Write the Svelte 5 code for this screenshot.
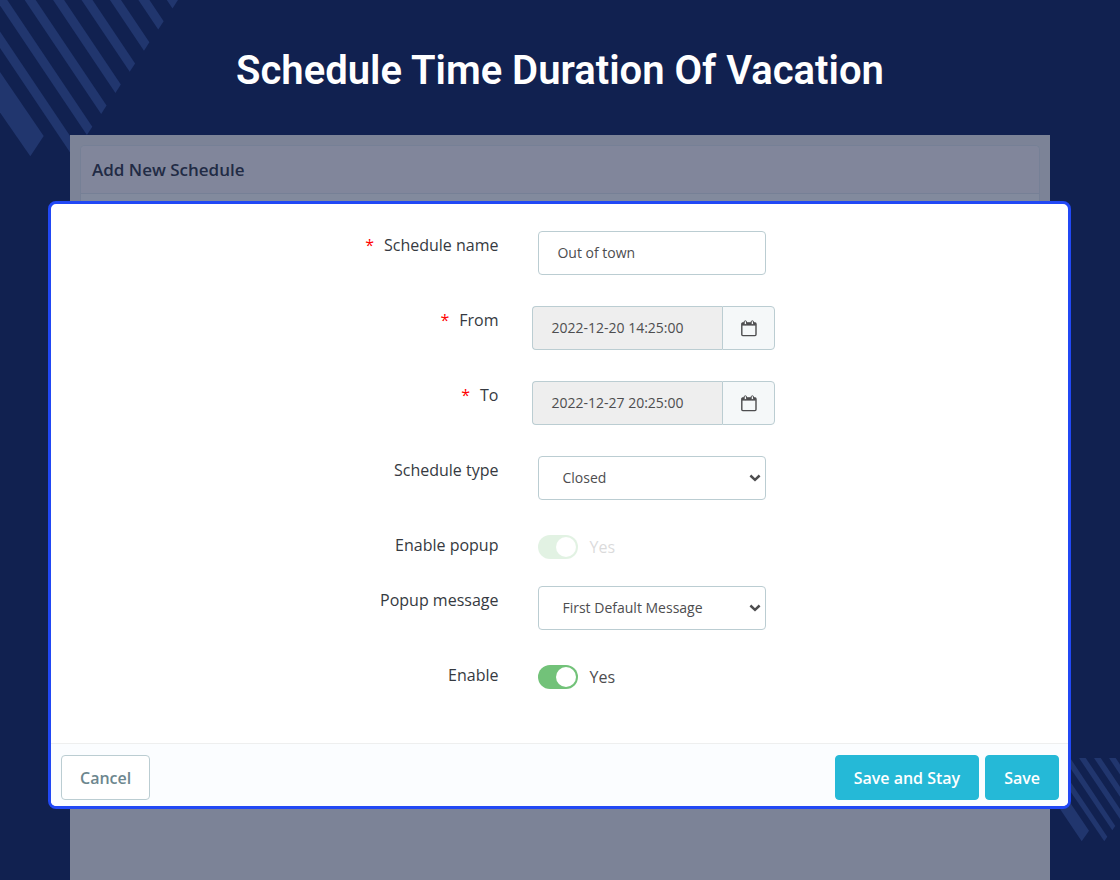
<script>
  let name = $state('Out of town');
  let type = $state('Closed');
  let message = $state('First Default Message');
  let enabled = $state(true);

  const dates = [
    { id: 'from', label: 'From', value: '2022-12-20 14:25:00' },
    { id: 'to', label: 'To', value: '2022-12-27 20:25:00' }
  ];
  const stripes = [-1, 0, 1, 2, 3, 4, 5, 6];

  function stripe(k) {
    const x = 92.3 + 14.27 * k;
    const y = 126.7 - 21.1 * k;
    return `M${x} ${y}L${x - 5.4} ${y + 8.4}l-130 -193.7L${x - 130} ${y - 193.7}Z`;
  }
</script>

{#snippet chevron()}
  <svg class="chevron" width="12" height="8" viewBox="0 0 12 8" aria-hidden="true">
    <path d="M1.4 1.5 6 5.8 10.6 1.5" fill="none" stroke="#4d4d4f" stroke-width="2.5" />
  </svg>
{/snippet}

<div class="page">
  <svg class="stripes top" width="190" height="160" viewBox="0 0 190 160" aria-hidden="true">
    <path d="M0 72 43.7 136 30.3 156.3 0 112.5Z" />
    {#each stripes as k}
      <path d={stripe(k)} />
    {/each}
  </svg>
  <svg class="stripes bottom" width="80" height="84" viewBox="1040 758 80 84" aria-hidden="true">
    <path d="M1089 830.7 1081.7 841.3 1040 779.2V758Z" />
    <path d="M1047.7 758h6.7l52.9 78.7-3 4.6Z" />
    <path d="M1063.5 758h6.7l45.1 68-3 4.3Z" />
    <path d="M1079 758h6.7l34.3 51v10Z" />
    <path d="M1094 758h6.7l19.3 28.7v10Z" />
    <path d="M1109 758h6.7l4.3 6.4v10Z" />
  </svg>

  <h1>Schedule Time Duration Of Vacation</h1>

  <main class="panel">
    <div class="card"><h2>Add New Schedule</h2></div>

    <form class="dialog" onsubmit={(e) => e.preventDefault()}>
      <div class="fields">
        <div class="row">
          <label class="label" for="name"><span class="star">*</span>Schedule name</label>
          <input class="box" id="name" type="text" bind:value={name} />
        </div>
        {#each dates as d}
          <div class="row">
            <label class="label" for={d.id}><span class="star">*</span>{d.label}</label>
            <div class="date">
              <input id={d.id} type="text" value={d.value} readonly />
              <button type="button" aria-label="Pick date">
                <svg width="16" height="18" viewBox="0 0 16 18" aria-hidden="true">
                  <rect x="0.8" y="4" width="14.2" height="12.6" rx="1" fill="none" stroke="#4d4d4f" stroke-width="1.4" />
                  <path d="M1 3.8h13.8v2.8H1z" fill="#4d4d4f" />
                  <rect x="3.2" y="1.8" width="2.3" height="3.8" rx="1.1" fill="#f5f8f9" stroke="#4d4d4f" stroke-width="1" />
                  <rect x="10.2" y="1.8" width="2.3" height="3.8" rx="1.1" fill="#f5f8f9" stroke="#4d4d4f" stroke-width="1" />
                </svg>
              </button>
            </div>
          </div>
        {/each}
        <div class="row">
          <label class="label" for="type">Schedule type</label>
          <div class="pick">
            <select class="box" id="type" bind:value={type}>
              <option>Closed</option>
              <option>Open</option>
            </select>
            {@render chevron()}
          </div>
        </div>
        <div class="row short">
          <label class="label" for="popup">Enable popup</label>
          <div class="switch faded">
            <input id="popup" type="checkbox" checked disabled />
            <span>Yes</span>
          </div>
        </div>
        <div class="row">
          <label class="label" for="message">Popup message</label>
          <div class="pick">
            <select class="box" id="message" bind:value={message}>
              <option>First Default Message</option>
            </select>
            {@render chevron()}
          </div>
        </div>
        <div class="row short">
          <label class="label" for="enable">Enable</label>
          <div class="switch">
            <input id="enable" type="checkbox" bind:checked={enabled} />
            <span>{enabled ? 'Yes' : 'No'}</span>
          </div>
        </div>
      </div>
      <footer>
        <button class="btn cancel" type="button">Cancel</button>
        <button class="btn primary" type="submit">Save and Stay</button>
        <button class="btn primary" type="submit">Save</button>
      </footer>
    </form>
  </main>
</div>

<style>
  :global(body) {
    margin: 0;
  }
  .page,
  .page * {
    box-sizing: border-box;
  }
  .page {
    position: relative;
    min-height: 100vh;
    display: flex;
    flex-direction: column;
    background: #112150;
    font-family: 'Open Sans', sans-serif;
    font-size: 16px;
    line-height: 22px;
    color: #363a41;
    overflow: hidden;
  }
  .stripes {
    position: absolute;
    fill: #21366e;
  }
  .top {
    top: 0;
    left: 0;
  }
  .bottom {
    right: 0;
    bottom: 38px;
  }
  h1 {
    margin: 0;
    padding: 47px 24px 40px;
    font: 600 40px/48px Roboto, sans-serif;
    color: #fff;
    text-align: center;
  }
  .panel {
    position: relative;
    flex: 1;
    margin: 0 70px;
    padding-top: 10px;
    background: #7c8397;
  }
  .card {
    margin: 0 10px;
    height: 56px;
    border: 1px solid #768096;
    border-bottom: 0;
    border-radius: 5px 5px 0 0;
    background: #828a9d;
  }
  h2 {
    margin: 0;
    padding: 12px 11px;
    border-bottom: 1px solid #768096;
    border-radius: 4px 4px 0 0;
    background: #81869b;
    font-size: 17px;
    font-weight: 600;
    line-height: 23px;
    color: #212b45;
  }
  .dialog {
    margin: 0 -21px 71px -22px;
    border: 3px solid #2148f5;
    border-radius: 8px;
    background: #fff;
    overflow: hidden;
  }
  .fields {
    padding: 27px 0 54px;
  }
  .row {
    display: grid;
    grid-template-columns: 44% 1fr;
    column-gap: 40px;
    align-items: start;
    min-height: 44px;
  }
  .row + .row {
    margin-top: 31px;
  }
  .row.short {
    min-height: 28px;
  }
  .row.short + .row {
    margin-top: 27px;
  }
  .label {
    padding-top: 3px;
    text-align: right;
  }
  .star {
    margin-right: 10px;
    color: #f00;
  }
  .box,
  .date input {
    margin: 0;
    height: 44px;
    border: 1px solid #bbcdd2;
    border-radius: 4px;
    padding: 0 18px 1px;
    background: #fff;
    font: 14px/20px 'Open Sans', sans-serif;
    color: #4d4d4f;
  }
  .box {
    width: 228px;
  }
  .date {
    display: flex;
    width: 243px;
    margin-left: -6px;
  }
  .date input {
    flex: 1;
    min-width: 0;
    border-right: 0;
    border-radius: 4px 0 0 4px;
    background: #eee;
  }
  .date button {
    display: grid;
    place-items: center;
    width: 53px;
    padding: 0;
    border: 1px solid #bbcdd2;
    border-radius: 0 4px 4px 0;
    background: #f5f8f9;
  }
  .pick {
    display: grid;
    width: 228px;
    align-items: center;
  }
  .pick > :global(*) {
    grid-area: 1 / 1;
  }
  .pick .box {
    appearance: none;
    padding: 0 24px 0 23px;
  }
  .chevron {
    justify-self: end;
    margin-right: 5px;
    pointer-events: none;
  }
  .switch {
    display: flex;
    align-items: center;
    gap: 11px;
    padding-top: 4px;
    line-height: 24px;
    color: #4d4d4f;
  }
  .faded {
    opacity: 0.2;
  }
  .switch input {
    appearance: none;
    display: flex;
    align-items: center;
    justify-content: flex-start;
    width: 40px;
    height: 24px;
    margin: 0;
    padding: 2px;
    border-radius: 12px;
    background: #b3c7cd;
  }
  .switch input:checked {
    justify-content: flex-end;
    background: #72c279;
  }
  .switch input::before {
    content: '';
    width: 20px;
    height: 20px;
    border-radius: 50%;
    background: #fff;
  }
  footer {
    display: flex;
    gap: 6px;
    padding: 11px 9px 6px 10px;
    border-top: 1px solid #eeefef;
    background: #fbfdff;
  }
  .btn {
    height: 45px;
    padding: 0 18px;
    border: 1px solid #25b9d7;
    border-radius: 4px;
    font: 600 16px/22px 'Open Sans', sans-serif;
  }
  .cancel {
    margin-right: auto;
    border-color: #bbcdd2;
    background: #fff;
    color: #6c868e;
  }
  .primary {
    background: #25b9d7;
    color: #fff;
  }
</style>
